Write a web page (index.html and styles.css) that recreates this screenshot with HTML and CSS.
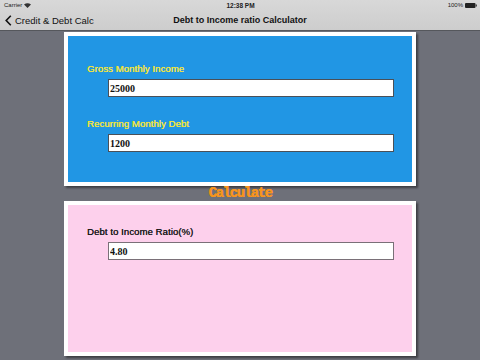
FILE: index.html
```html
<!DOCTYPE html>
<html lang="en">
<head>
    <meta charset="UTF-8">
    <meta name="viewport" content="width=device-width, initial-scale=1.0">
    <title>Debt to Income ratio Calculator</title>
    <link rel="stylesheet" href="styles.css">
</head>
<body>

    <div class="top-bar">
        <div class="status-bar">
            <span class="carrier">Carrier
                <svg width="7" height="5" viewBox="0 0 7 5"><path d="M0 1.6 Q3.5 -1 7 1.6 L3.5 5 Z" fill="#333"/></svg>
            </span>
            <span class="clock">12:38 PM</span>
            <span class="battery">100%
                <svg width="12" height="5" viewBox="0 0 12 5"><rect x="0" y="0" width="10.5" height="5" rx="1" fill="#222"/><rect x="10.8" y="1.5" width="1" height="2" fill="#222"/></svg>
            </span>
        </div>
        <div class="nav-bar">
            <a class="back-link">
                <svg width="7" height="11" viewBox="0 0 7 11"><polyline points="5.8,0.8 1.2,5.5 5.8,10.2" fill="none" stroke="#111" stroke-width="1.6"/></svg>
                Credit &amp; Debt Calc
            </a>
            <span class="nav-title">Debt to Income ratio Calculator</span>
        </div>
    </div>

    <div class="content">
        <!-- inputs -->
        <div class="card">
            <div class="card-inner blue">
                <p class="field-label yellow">Gross Monthly Income</p>
                <input class="field" type="text" value="25000">
                <p class="field-label yellow second">Recurring Monthly Debt</p>
                <input class="field" type="text" value="1200">
            </div>
        </div>

        <button class="calc-button">Calculate</button>

        <!-- result -->
        <div class="card result-card">
            <div class="card-inner pink">
                <p class="field-label dark">Debt to Income Ratio(%)</p>
                <input class="field" type="text" value="4.80">
            </div>
        </div>
    </div>

</body>
</html>
```
FILE: styles.css
```css
body {
    margin: 0;
    width: 480px;
    height: 360px;
    overflow: hidden;
    background-color: #6e7079;
    font-family: "Liberation Sans", Arial, sans-serif;
}
.top-bar {
    background: linear-gradient(#d8d8d8, #cdcdcd);
    border-bottom: 1px solid #55575c;
}
.status-bar {
    height: 10px;
    display: flex;
    align-items: center;
    justify-content: space-between;
    padding: 0 3px 0 4px;
    font-size: 6px;
    color: #222;
}
.carrier, .battery {
    display: flex;
    align-items: center;
    gap: 2px;
    width: 60px;
}
.battery {
    justify-content: flex-end;
}
.clock {
    font-weight: bold;
    font-size: 6.5px;
}
.nav-bar {
    height: 20px;
    display: flex;
    align-items: center;
    position: relative;
    padding-left: 5px;
}
.back-link {
    display: flex;
    align-items: center;
    gap: 3px;
    font-size: 9.5px;
    color: #111;
}
.nav-title {
    position: absolute;
    left: 0;
    right: 0;
    text-align: center;
    font-weight: bold;
    font-size: 9px;
    color: #111;
    pointer-events: none;
}
.content {
    display: flex;
    flex-direction: column;
    align-items: flex-start;
    padding: 1px 0 0 64px;
}
.card {
    width: 344px;
    border: 4px solid #ffffff;
    box-shadow: 2px 2px 2px rgba(0, 0, 0, 0.45);
}
.card-inner {
    display: flex;
    flex-direction: column;
    align-items: flex-start;
    padding: 26px 18px 30px 19px;
}
.blue {
    background-color: #2196e4;
}
.pink {
    background-color: #fdd0ec;
    height: 147px;
    box-sizing: border-box;
    padding-top: 20px;
}
.field-label {
    margin: 0;
    height: 14px;
    line-height: 14px;
    font-size: 9.5px;
    letter-spacing: 0.1px;
}
.second {
    margin-top: 20px;
}
.yellow {
    color: #f3e53a;
    text-shadow: 0.3px 0 0 #f3e53a;
}
.dark {
    color: #1a1a1a;
    text-shadow: 0.3px 0 0 #1a1a1a;
}
.field {
    box-sizing: border-box;
    width: 286px;
    height: 18px;
    margin: 3px 0 0 21px;
    padding: 0 0 0 1px;
    border: 1px solid #4a5058;
    background-color: #ffffff;
    font-family: "Liberation Serif", "Times New Roman", serif;
    font-weight: bold;
    font-size: 10px;
    color: #111;
    outline: none;
}
.pink .field {
    border-color: #7a7078;
}
.calc-button {
    align-self: center;
    margin: 0 0 0 -64px;
    height: 15px;
    padding: 0;
    background: none;
    border: none;
    font-family: "Liberation Mono", "Courier New", monospace;
    font-weight: bold;
    font-size: 14px;
    line-height: 15px;
    letter-spacing: -1.4px;
    color: #f7941d;
    text-shadow: 0.4px 0 0 #f7941d;
    cursor: pointer;
}
```
